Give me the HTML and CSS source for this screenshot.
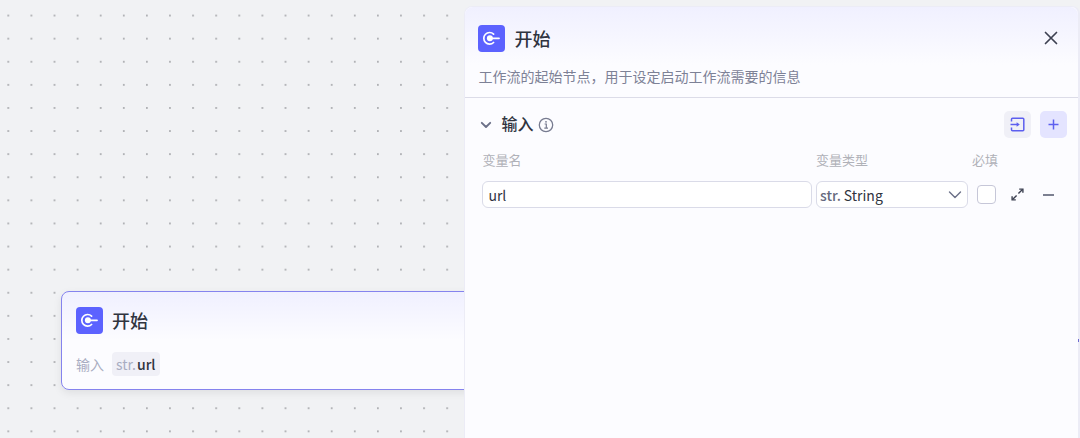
FILE: index.html
```html
<!DOCTYPE html>
<html lang="zh-CN">

<head>
    <meta charset="UTF-8">
    <meta name="viewport" content="width=device-width, initial-scale=1.0">
    <title>开始</title>
    <link rel="stylesheet" href="styles.css">
</head>

<body>
    <main class="canvas">
        <svg class="grid-dots" aria-hidden="true">
            <defs>
                <pattern id="dots" width="23.1" height="23.1" patternUnits="userSpaceOnUse" x="-3.2" y="4">
                    <circle cx="11.5" cy="11.5" r="0.9" fill="#9a9ca0" />
                </pattern>
            </defs>
            <rect width="100%" height="100%" fill="url(#dots)" />
        </svg>

        <!-- start node -->
        <section class="node">
            <div class="title-row">
                <svg class="logo" viewBox="0 0 27 27">
                    <rect width="27" height="27" rx="4" fill="#5c62ff" />
                    <path d="M15.6 9.1A5.8 5.8 0 1 0 15.6 17.5" fill="none" stroke="#fff" stroke-width="1.7" stroke-linecap="round" />
                    <circle cx="11.9" cy="13.3" r="3" fill="#fff" />
                    <path d="M12 13.3H21" stroke="#fff" stroke-width="1.8" stroke-linecap="round" />
                </svg>
                <h2 class="title">开始</h2>
            </div>
            <div class="node-inputs">
                <span class="node-label">输入</span>
                <span class="tag"><span class="tag-type">str.</span>url</span>
            </div>
            <span class="port"></span>
        </section>

        <!-- settings panel -->
        <aside class="panel">
            <header class="panel-header">
                <div class="title-row">
                    <svg class="logo" viewBox="0 0 27 27">
                        <rect width="27" height="27" rx="4" fill="#5c62ff" />
                        <path d="M15.6 9.1A5.8 5.8 0 1 0 15.6 17.5" fill="none" stroke="#fff" stroke-width="1.7" stroke-linecap="round" />
                        <circle cx="11.9" cy="13.3" r="3" fill="#fff" />
                        <path d="M12 13.3H21" stroke="#fff" stroke-width="1.8" stroke-linecap="round" />
                    </svg>
                    <h1 class="title">开始</h1>
                    <button class="icon-button close" type="button" aria-label="关闭">
                        <svg width="14" height="14" viewBox="0 0 14 14">
                            <path d="M1.5 1.5L12.5 12.5M12.5 1.5L1.5 12.5" stroke="#3d4152" stroke-width="1.7" stroke-linecap="round" />
                        </svg>
                    </button>
                </div>
                <p class="description">工作流的起始节点，用于设定启动工作流需要的信息</p>
            </header>

            <section class="inputs">
                <div class="section-bar">
                    <svg class="fold" width="12" height="8" viewBox="0 0 12 8">
                        <path d="M1.8 1.8L6 6L10.2 1.8" fill="none" stroke="#6b7088" stroke-width="1.9" stroke-linecap="round" stroke-linejoin="round" />
                    </svg>
                    <h2 class="section-title">输入</h2>
                    <svg class="info" width="16" height="16" viewBox="0 0 16 16" fill="none" stroke="#777b90">
                        <circle cx="8" cy="8" r="6.7" stroke-width="1.3" />
                        <path d="M6.6 7H8.3V11M6.3 11.2H10" stroke-width="1.2" />
                        <circle cx="8" cy="4.8" r="0.9" fill="#777b90" stroke="none" />
                    </svg>
                    <div class="actions">
                        <button class="icon-button soft" type="button" aria-label="导入">
                            <svg width="15" height="15" viewBox="0 0 15 15" fill="none" stroke="#5d5fef" stroke-width="1.5">
                                <path d="M1.5 4.6V2.2Q1.5 1.2 2.5 1.2H12.8Q13.8 1.2 13.8 2.2V12.8Q13.8 13.8 12.8 13.8H2.5Q1.5 13.8 1.5 12.8V10.4" />
                                <path d="M0.5 7.5H8" />
                                <path d="M6.6 5.2L9.8 7.5L6.6 9.8Z" fill="#5d5fef" stroke="none" />
                            </svg>
                        </button>
                        <button class="icon-button strong" type="button" aria-label="添加">
                            <svg width="11" height="11" viewBox="0 0 11 11">
                                <path d="M5.5 0.5V10.5M0.5 5.5H10.5" stroke="#5d5fef" stroke-width="1.5" />
                            </svg>
                        </button>
                    </div>
                </div>

                <form class="fields">
                    <label class="field-label" for="var-name">变量名</label>
                    <label class="field-label" for="var-type">变量类型</label>
                    <label class="field-label last-label" for="var-required">必填</label>

                    <input id="var-name" class="text-box" type="text" value="url">
                    <div class="select-box">
                        <span class="type-prefix">str.</span>
                        <select id="var-type" class="select">
                            <option>String</option>
                        </select>
                        <svg class="arrow" width="14" height="8" viewBox="0 0 14 8">
                            <path d="M1.5 1L7 6.6L12.5 1" fill="none" stroke="#6b7088" stroke-width="1.4" stroke-linecap="round" stroke-linejoin="round" />
                        </svg>
                    </div>
                    <input id="var-required" class="check" type="checkbox">
                    <button class="icon-button" type="button" aria-label="展开">
                        <svg width="13" height="13" viewBox="0 0 13 13" fill="#3d4152" stroke="#3d4152" stroke-width="1.4">
                            <path d="M7.4 5.6L11.5 1.5M5.6 7.4L1.5 11.5" />
                            <path d="M8.2 1.1H11.9V4.8M4.8 11.9H1.1V8.2" fill="none" />
                        </svg>
                    </button>
                    <button class="icon-button" type="button" aria-label="删除">
                        <svg width="11" height="2" viewBox="0 0 11 2">
                            <path d="M0 1H11" stroke="#7c8091" stroke-width="2" />
                        </svg>
                    </button>
                </form>
            </section>
        </aside>
    </main>
</body>

</html>
```
FILE: styles.css
```css
* {
    box-sizing: border-box;
    margin: 0;
    padding: 0;
}

body {
    font-family: "Noto Sans CJK SC", sans-serif;
    font-size: 14px;
    line-height: 20px;
    color: #30343f;
}

input,
select,
button {
    font: inherit;
    color: inherit;
}

.canvas {
    position: relative;
    min-height: 100vh;
    overflow: hidden;
    background: #f1f2f4;
}

.grid-dots {
    position: absolute;
    width: 100%;
    height: 100%;
}

/* node */
.node {
    position: absolute;
    top: 291px;
    left: 61px;
    right: 0;
    padding: 14px 14px 13px;
    border: 1px solid #8583ee;
    border-radius: 8px;
    background: linear-gradient(#f0f0ff, #fcfcff 50%);
    box-shadow: 0 3px 8px rgba(0, 0, 0, 0.08);
}

.title-row {
    display: flex;
    align-items: center;
    gap: 9px;
}

.logo {
    width: 27px;
    height: 27px;
}

.title {
    font-size: 18px;
    line-height: 28px;
    font-weight: 500;
}

.node-inputs {
    display: flex;
    align-items: center;
    gap: 8px;
    margin-top: 18px;
}

.node-label {
    color: #a9adc2;
}

.tag {
    display: flex;
    gap: 1px;
    padding: 2px 4px;
    border-radius: 4px;
    background: #f0f0f7;
    font-weight: 500;
}

.tag-type {
    color: #a9adc2;
    font-weight: 400;
}

.port {
    position: absolute;
    top: 47px;
    right: 0;
    width: 1px;
    height: 3px;
    background: #6d6ad0;
}

/* panel */
.panel {
    position: absolute;
    top: 6px;
    right: 0;
    bottom: 0;
    width: 57%;
    border: 1px solid #ececf6;
    border-right-width: 2px;
    border-bottom: 0;
    border-radius: 8px 8px 0 0;
    background: #fcfcff;
}

/* lets the port of the node show at the edge */
.node .port {
    z-index: 1;
}

.panel-header {
    padding: 17px 14px 11px 13px;
    border-bottom: 1px solid #dcdce8;
    border-radius: 8px 8px 0 0;
    background: linear-gradient(#f0f0ff, #fcfcff 64%);
}

.icon-button {
    display: flex;
    align-items: center;
    justify-content: center;
    width: 27px;
    height: 27px;
    border: 0;
    border-radius: 5px;
    background: none;
    cursor: pointer;
}

.close {
    margin-left: auto;
}

.description {
    margin-top: 14px;
    color: #7d8196;
}

.inputs {
    padding: 13px 11px 0 15px;
}

.section-bar {
    display: flex;
    align-items: center;
}

.section-title {
    margin: 0 5px 0 9px;
    padding-bottom: 3px;
    font-size: 16px;
    line-height: 24px;
    font-weight: 500;
}

.actions {
    display: flex;
    gap: 9px;
    margin-left: auto;
}

.soft {
    background: #f0f0f7;
}

.strong {
    background: #e4e4ff;
}

.fields {
    display: grid;
    grid-template-columns: 1fr 152px 28px 27px 27px;
    align-items: center;
    gap: 11px 4px;
    padding: 12px 5px 0 2px;
}

.field-label {
    color: #b0b1b8;
    font-size: 13px;
}

.last-label {
    grid-column: span 3;
}

.text-box,
.select-box {
    width: 100%;
    height: 27px;
    border: 1px solid #dadbe8;
    border-radius: 6px;
    background: #fff;
}

.text-box {
    padding: 0 5px;
}

.select-box {
    position: relative;
    display: flex;
    align-items: center;
    padding-left: 3px;
}

.type-prefix {
    color: #666a7e;
    font-weight: 500;
}

.select {
    flex: 1;
    padding-left: 3px;
    border: 0;
    background: none;
    appearance: none;
}

.arrow {
    position: absolute;
    right: 5px;
    pointer-events: none;
}

.check {
    justify-self: center;
    width: 19px;
    height: 19px;
    border: 1px solid #c6c7d8;
    border-radius: 4px;
    background: #fff;
    appearance: none;
}
```
